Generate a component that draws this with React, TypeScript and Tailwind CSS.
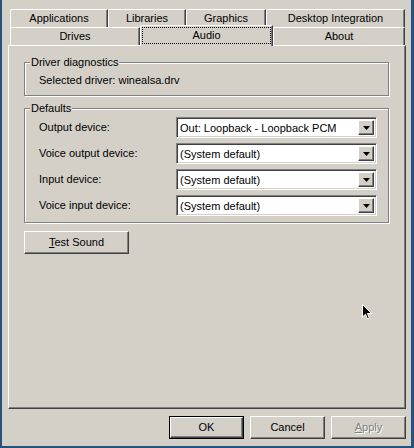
import React from "react";

const raised =
  "border border-t-white border-l-white border-r-[#404040] border-b-[#404040] shadow-[inset_-1px_-1px_0_#808080]";
const sunken =
  "border border-t-[#808080] border-l-[#808080] border-r-white border-b-white shadow-[inset_1px_1px_0_#404040,inset_-1px_-1px_0_#d4d0c8]";
const etched = "border border-[#808080] shadow-[1px_1px_0_#fff,inset_1px_1px_0_#fff]";

const tabBase =
  "flex items-center justify-center bg-[#d4d0c8] border-l border-t border-r border-l-white border-t-white border-r-[#404040] rounded-tl-[2px] shadow-[inset_-1px_0_0_#808080]";

const rows = [
  { label: "Output device:", value: "Out: Loopback - Loopback PCM" },
  { label: "Voice output device:", value: "(System default)" },
  { label: "Input device:", value: "(System default)" },
  { label: "Voice input device:", value: "(System default)" },
];

function Combo({ value }: { value: string }) {
  return (
    <div className={`flex h-[21px] w-[201px] bg-white p-[2px] ${sunken}`}>
      <span className="flex-1 truncate pl-[1px] leading-[17px]">{value}</span>
      <div className={`flex w-[16px] items-center justify-center bg-[#d4d0c8] ${raised}`}>
        <svg width="7" height="4" viewBox="0 0 7 4">
          <polygon points="0,0 7,0 3.5,4" fill="#000" />
        </svg>
      </div>
    </div>
  );
}

export default function App() {
  return (
    <div className="relative h-[448px] w-[414px] bg-[#24547e] pb-[2px] pl-[2px] pr-[3px] font-['Liberation_Sans',Arial,sans-serif] text-[11px] leading-[13px] text-black">
      <div className="flex h-[446px] flex-col bg-[#d4d0c8] pl-[6px] pt-[9px]">
        {/* Tabs, top row */}
        <div className="ml-[2px] flex h-[18px] w-[395px]">
          <div className={`${tabBase} w-[98px] pb-[1px]`}>Applications</div>
          <div className={`${tabBase} w-[78px] pb-[1px]`}>Libraries</div>
          <div className={`${tabBase} w-[80px] pb-[1px]`}>Graphics</div>
          <div className={`${tabBase} w-[139px] pb-[1px]`}>Desktop Integration</div>
        </div>
        {/* Tabs, front row */}
        <div className="ml-[2px] flex h-[18px] w-[395px] items-end">
          <div className={`${tabBase} h-[18px] w-[130px]`}>Drives</div>
          <div className={`${tabBase} relative top-[1px] z-10 h-[21px] w-[133px] flex-col items-stretch px-[1px] pb-[2px] pt-[1px]`}>
            <div className="flex flex-1 items-center justify-center border border-dotted border-black">Audio</div>
          </div>
          <div className={`${tabBase} h-[18px] w-[132px]`}>About</div>
        </div>

        {/* Panel */}
        <div className={`h-[364px] w-[398px] px-[15px] pt-[10px] ${raised}`}>
          <fieldset className={`w-[365px] p-0 ${etched}`}>
            <legend className="ml-[5px] bg-[#d4d0c8] px-[1px] leading-[13px]">Driver diagnostics</legend>
            <div className="pb-[8px] pl-[14px] pt-[5px]">Selected driver: winealsa.drv</div>
          </fieldset>

          <fieldset className={`mt-[6px] w-[365px] p-0 ${etched}`}>
            <legend className="ml-[5px] bg-[#d4d0c8] px-[1px] leading-[13px]">Defaults</legend>
            <div className="flex flex-col gap-[5px] pb-[6px] pl-[14px] pt-[2px]">
              {rows.map((r) => (
                <div key={r.label} className="flex items-center">
                  <span className="w-[137px]">{r.label}</span>
                  <Combo value={r.value} />
                </div>
              ))}
            </div>
          </fieldset>

          <button className={`mt-[8px] flex h-[23px] w-[105px] items-center justify-center bg-[#d4d0c8] ${raised}`}>
            <span>
              <span className="underline">T</span>est Sound
            </span>
          </button>
        </div>

        {/* Dialog buttons */}
        <div className="mt-[7px] flex justify-end gap-[6px] pr-[5px]">
          <div className="h-[23px] w-[75px] border border-black">
            <button className={`flex h-full w-full items-center justify-center bg-[#d4d0c8] ${raised}`}>OK</button>
          </div>
          <button className={`flex h-[23px] w-[75px] items-center justify-center bg-[#d4d0c8] ${raised}`}>Cancel</button>
          <button className={`flex h-[23px] w-[75px] items-center justify-center bg-[#d4d0c8] text-[#808080] [text-shadow:1px_1px_0_#fff] ${raised}`}>
            <span>
              <span className="underline">A</span>pply
            </span>
          </button>
        </div>
      </div>

      {/* mouse pointer */}
      <svg className="absolute left-[362px] top-[304px]" width="11" height="17" viewBox="0 0 11 17">
        <polygon points="0.5,0.5 0.5,13 3.5,10.2 5.6,15 7.4,14.2 5.4,9.5 9.5,9.5" fill="#000" stroke="#fff" strokeWidth="1" />
      </svg>
    </div>
  );
}
